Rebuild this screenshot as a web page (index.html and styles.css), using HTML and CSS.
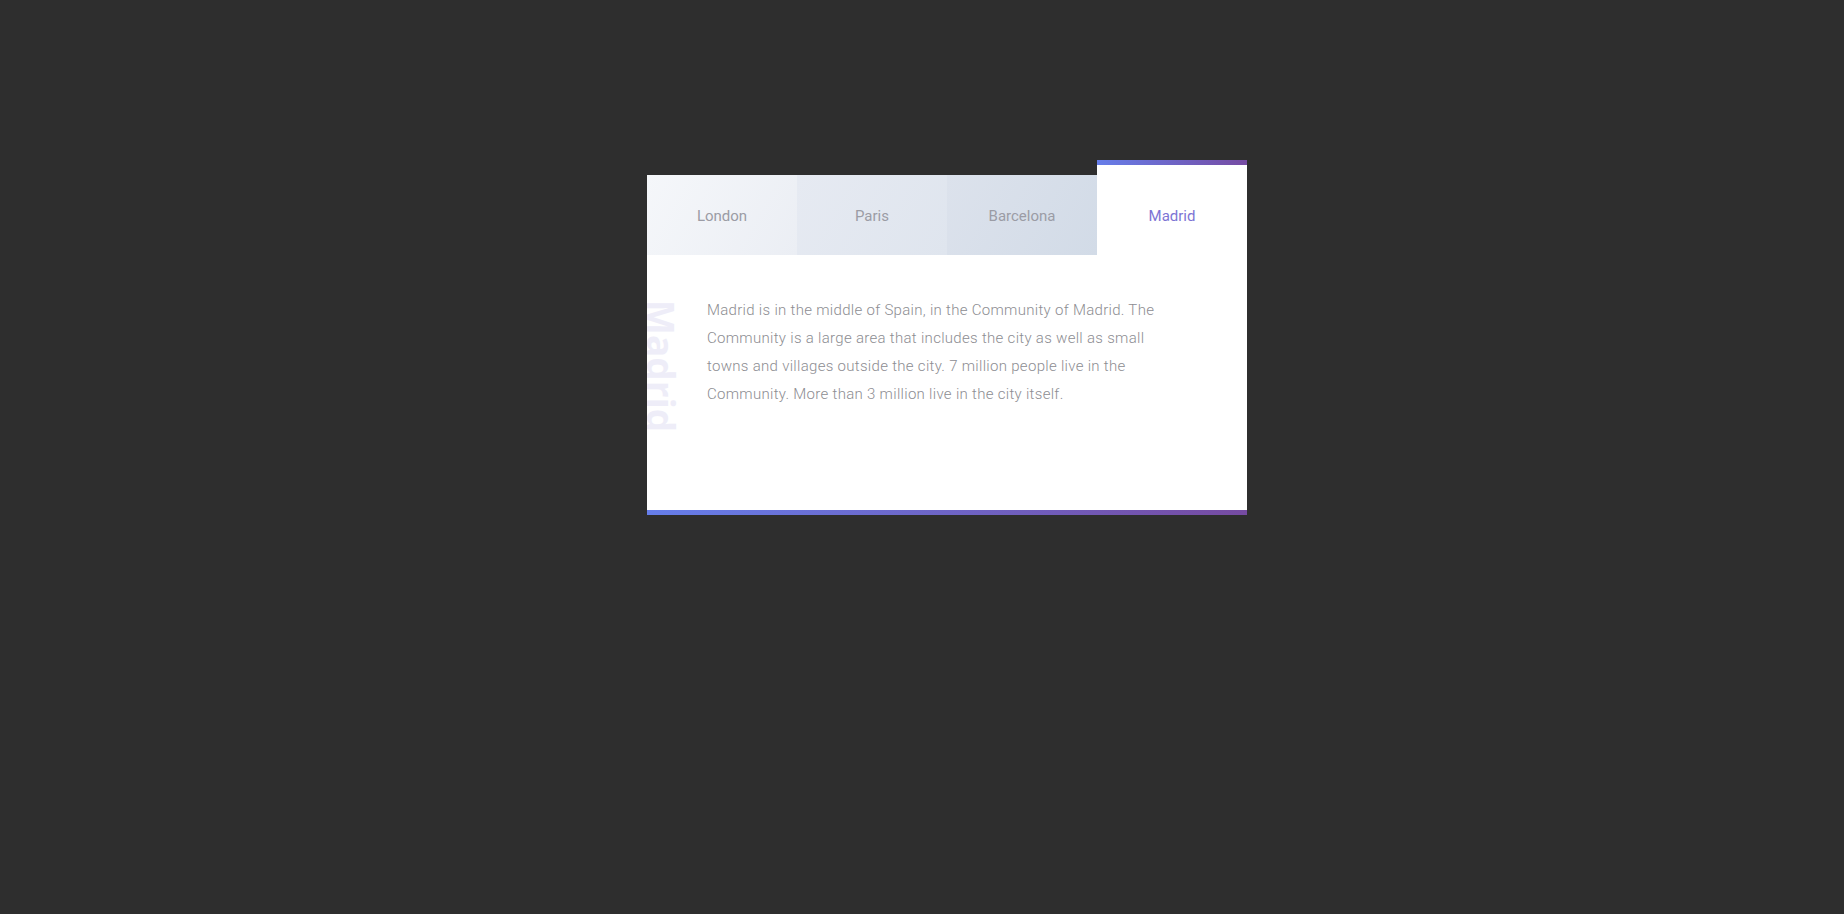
FILE: index.html
```html
<!DOCTYPE html>
<html lang="en">
<head>
<meta charset="utf-8">
<title>Cities</title>
<link rel="stylesheet" href="styles.css">
</head>
<body>
<div class="stage">
  <div class="card">
    <nav class="tabs">
      <div class="tab tab-london">London</div>
      <div class="tab tab-paris">Paris</div>
      <div class="tab tab-barcelona">Barcelona</div>
      <div class="tab tab-active">Madrid</div>
    </nav>
    <section class="panel">
      <span class="panel-title">Madrid</span>
      <p class="panel-text">Madrid is in the middle of Spain, in the Community of Madrid. The Community is a large area that includes the city as well as small towns and villages outside the city. 7 million people live in the Community. More than 3 million live in the city itself.</p>
    </section>
  </div>
</div>
</body>
</html>
```

FILE: styles.css
```css
html, body {
  margin: 0;
  padding: 0;
  background: #2e2e2e;
  height: 100%;
}

body {
  font-family: Roboto, "Liberation Sans", sans-serif;
}

.stage {
  display: flex;
  justify-content: center;
  padding-top: 160px;
  padding-left: 50px;
}

.card {
  width: 600px;
  display: flex;
  flex-direction: column;
}

.tabs {
  display: flex;
  align-items: flex-end;
}

.tab {
  width: 150px;
  height: 80px;
  line-height: 82px;
  text-align: center;
  font-size: 15px;
  color: #9b9ca5;
}

.tab-london {
  background: linear-gradient(120deg, #f5f7fa 0%, #ebeef4 100%);
}

.tab-paris {
  background: linear-gradient(120deg, #e6eaf2 0%, #dfe5ee 100%);
}

.tab-barcelona {
  background: linear-gradient(120deg, #dce2ec 0%, #d2dbe7 100%);
}

.tab-active {
  background: #fff;
  color: #7d74d4;
  border-top: 5px solid #6a7fe0;
  border-image: linear-gradient(90deg, #667eea, #764ba2) 1;
  border-image-width: 5px 0 0 0;
  padding-top: 10px;
}

.panel {
  position: relative;
  overflow: hidden;
  background: #fff;
  box-sizing: border-box;
  height: 260px;
  padding: 41px 62px 0 60px;
  border-bottom: 5px solid #6a7fe0;
  border-image: linear-gradient(90deg, #667eea, #764ba2) 1;
  border-image-width: 0 0 5px 0;
}

.panel-title {
  position: absolute;
  left: -8px;
  top: 45px;
  writing-mode: vertical-rl;
  font-size: 37px;
  font-weight: 700;
  line-height: 1.2;
  color: #eeedf8;
  font-family: "Open Sans", "Liberation Sans", sans-serif;
}

.panel-text {
  position: relative;
  margin: 0;
  font-size: 15px;
  font-weight: 300;
  line-height: 28px;
  letter-spacing: 0.3px;
  color: #8d8d92;
}
```
